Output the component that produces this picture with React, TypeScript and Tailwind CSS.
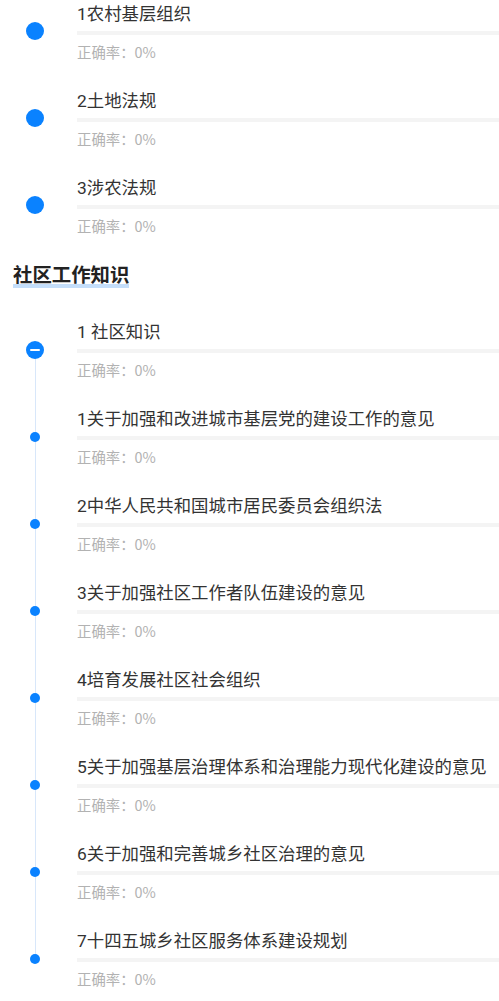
import React from 'react';

const font = { fontFamily: '"Roboto", "Noto Sans CJK SC", sans-serif' };
const cjk = { fontFamily: '"Noto Sans CJK SC", sans-serif' };

const basics = ['1农村基层组织', '2土地法规', '3涉农法规'];

const community = [
  '1 社区知识',
  '1关于加强和改进城市基层党的建设工作的意见',
  '2中华人民共和国城市居民委员会组织法',
  '3关于加强社区工作者队伍建设的意见',
  '4培育发展社区社会组织',
  '5关于加强基层治理体系和治理能力现代化建设的意见',
  '6关于加强和完善城乡社区治理的意见',
  '7十四五城乡社区服务体系建设规划',
];

function Body({ title }: { title: string }) {
  return (
    <div className="flex-1 ml-[7px] pt-[3px] pb-[25px] min-w-0">
      <div className="text-[17.4px] leading-[22px] text-[#333333] whitespace-nowrap">{title}</div>
      <div className="mt-[6px] h-[4px] bg-[#f4f4f4]" />
      <div className="mt-[7px] text-[14.4px] leading-5 text-[#b2b2b2]" style={cjk}>
        正确率：0%
      </div>
    </div>
  );
}

export default function App() {
  return (
    <div className="bg-white min-h-screen" style={font}>
      {basics.map((t) => (
        <div key={t} className="flex">
          <div className="w-[70px] flex flex-col items-center pt-[22px]">
            <div className="w-[18px] h-[18px] rounded-full bg-[#0a82ff]" />
          </div>
          <Body title={t} />
        </div>
      ))}

      <div className="mt-[3px] mb-[29px] ml-[13px]">
        <span className="inline-block text-[19.4px] leading-[24px] font-bold text-[#222222] bg-[linear-gradient(#c4defa,#c4defa)] bg-no-repeat bg-bottom bg-size-[100%_4px]">
          社区工作知识
        </span>
      </div>

      {community.map((t, i) => {
        const first = i === 0;
        const last = i === community.length - 1;
        return (
          <div key={t} className="flex">
            <div className="relative w-[70px] flex flex-col items-center">
              <div
                className={
                  first
                    ? 'absolute left-[34.5px] w-px top-[32px] bottom-0 bg-[#d8e7fa]'
                    : last
                    ? 'absolute left-[34.5px] w-px top-0 h-[32px] bg-[#d8e7fa]'
                    : 'absolute left-[34.5px] w-px top-0 bottom-0 bg-[#d8e7fa]'
                }
              />
              {first ? (
                <div className="relative mt-[23px] w-[18px] h-[18px] rounded-full bg-[#0a82ff] flex items-center justify-center">
                  <div className="w-[10px] h-[2px] rounded-full bg-white" />
                </div>
              ) : (
                <div className="relative mt-[27px] w-[10px] h-[10px] rounded-full bg-[#0a82ff]" />
              )}
            </div>
            <Body title={t} />
          </div>
        );
      })}
    </div>
  );
}
